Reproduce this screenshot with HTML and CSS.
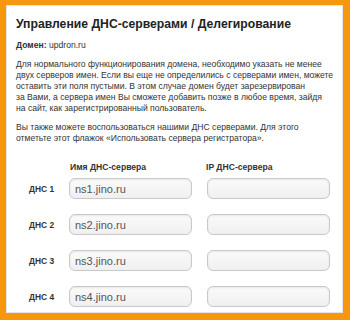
FILE: index.html
```html
<!DOCTYPE html>
<html lang="ru">
<head>
	<meta charset="UTF-8">
	<link rel="stylesheet" href="styles.css">
	<title>Управление ДНС-серверами</title>
</head>
<body>
<div class="panel">
	<h1>Управление ДНС-серверами / Делегирование</h1>
	<p class="domain"><b>Домен:</b> updron.ru</p>
	<p class="text">Для нормального функционирования домена, необходимо указать не менее<br>двух серверов имен. Если вы еще не определились с серверами имен, можете<br>оставить эти поля пустыми. В этом случае домен будет зарезервирован<br>за Вами, а сервера имен Вы сможете добавить позже в любое время, зайдя<br>на сайт, как зарегистрированный пользователь.</p>
	<p class="text">Вы также можете воспользоваться нашими ДНС серверами. Для этого<br>отметьте этот флажок «Использовать сервера регистратора».</p>
	<div class="dns">
		<span></span>
		<span class="head">Имя ДНС-сервера</span>
		<span class="head">IP ДНС-сервера</span>

		<span class="label">ДНС 1</span>
		<input class="field" type="text" value="ns1.jino.ru">
		<input class="field" type="text" value="">

		<span class="label">ДНС 2</span>
		<input class="field" type="text" value="ns2.jino.ru">
		<input class="field" type="text" value="">

		<span class="label">ДНС 3</span>
		<input class="field" type="text" value="ns3.jino.ru">
		<input class="field" type="text" value="">

		<span class="label">ДНС 4</span>
		<input class="field" type="text" value="ns4.jino.ru">
		<input class="field" type="text" value="">
	</div>
</div>
</body>
</html>
```

FILE: styles.css
```css
html,body,h1,p,div{
	margin: 0;
	padding: 0;
}
body{
	background: #f7960f;
	font-family: "Liberation Sans", Arial, sans-serif;
	color: #333;
	padding: 5px 7px 7px 6px;
	height: 320px;
	box-sizing: border-box;
}
.panel{
	background: #fff;
	border: 1px solid #e4e4e4;
	height: 100%;
	box-sizing: border-box;
	padding: 10px 10px 0 9px;
}
h1{
	font-size: 12.2px;
	font-weight: bold;
	color: #222;
	line-height: 16px;
}
.domain{
	font-size: 8.6px;
	margin-top: 8px;
	line-height: 11px;
}
.text{
	font-size: 8.6px;
	line-height: 11px;
	margin-top: 8px;
	white-space: nowrap;
}
.dns{
	display: grid;
	grid-template-columns: 53px 123px 122px;
	row-gap: 15px;
	margin-top: 18px;
	align-items: center;
}
.dns .field + .field{
	margin-left: 15px;
}
.dns .head + .head{
	margin-left: 13px;
}
.head{
	font-size: 8.6px;
	font-weight: bold;
	padding-left: 1px;
	margin-bottom: -9px;
}
.label{
	font-size: 8.4px;
	font-weight: bold;
	padding-left: 13px;
}
.field{
	width: 123px;
	height: 21px;
	box-sizing: border-box;
	border: 1px solid #c9c9c9;
	border-radius: 6px;
	background: linear-gradient(#fafafa, #f0f0f0);
	box-shadow: inset 0 1px 2px rgba(0,0,0,.08);
	font-family: "Liberation Sans", Arial, sans-serif;
	font-size: 11px;
	color: #555;
	padding: 0 5px;
	outline: none;
}
```
